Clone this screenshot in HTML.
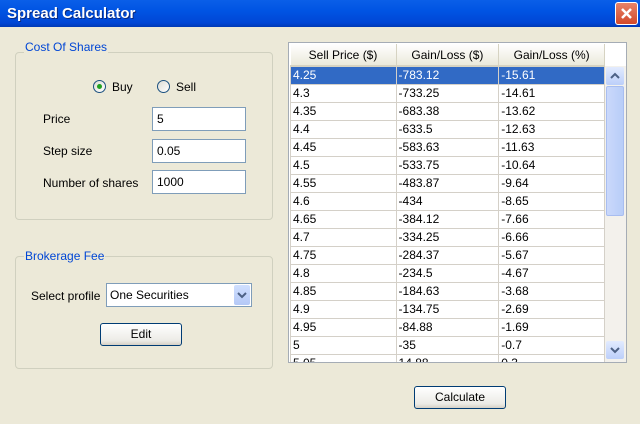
<!DOCTYPE html>
<html><head><style>
*{margin:0;padding:0;box-sizing:border-box}
body{width:640px;height:424px;background:#ece9d8;font-family:"Liberation Sans",sans-serif;font-size:12px;color:#000;position:relative;overflow:hidden}
.abs{position:absolute}
.title{left:0;top:0;width:640px;height:27px;background:linear-gradient(#0a5fe8,#0054e3 40%,#0046d5 85%,#0039b5);color:#fff;font-weight:bold;font-size:15px;padding:5px 0 0 7px;text-shadow:1px 1px #0a2a80}
.close{left:615px;top:2px;width:23px;height:23px;border:1px solid #fff;border-radius:3px;background:linear-gradient(#e8836a,#d3492a);}
.grp{border:1px solid #d0d0bf;border-radius:4px}
.legend{color:#0046d5;background:#ece9d8;padding:0 1px}
.tb{border:1px solid #7f9db9;background:#fff;padding:4px 4px;height:24px}
.btn{border:1px solid #003c74;border-radius:3px;background:linear-gradient(#fff,#ecebe6 80%,#d6d0c5);text-align:center;line-height:21px}
.radio{width:13px;height:13px;border:1px solid #1c5180;border-radius:50%;background:linear-gradient(135deg,#dcdcd4,#fff)}
.wrap{position:absolute;left:289px;top:43px;width:337px;height:319px;overflow:hidden;background:#fff}
table{border-collapse:collapse;position:absolute;left:1px;top:1px;width:315px;background:#fff}
td{height:18px;border:1px solid #d4d0c8;padding:0 2px;font-size:12px;white-space:nowrap}
th{height:22px;font-weight:normal;background:linear-gradient(#fff,#ebeadb);border-bottom:2px solid #d6d3c2;border-right:1px solid #d6d3c2;text-align:center}
tr.sel td{background:#316ac5;color:#fff}
</style></head><body>
<div class="abs title">Spread Calculator</div>
<div class="abs close"><svg width="21" height="21"><path d="M6 6L15 15M15 6L6 15" stroke="#fff" stroke-width="2.5"/></svg></div>

<div class="abs grp" style="left:15px;top:52px;width:258px;height:168px"></div>
<div class="abs legend" style="left:24px;top:40px">Cost Of Shares</div>
<div class="abs radio" style="left:93px;top:80px"><div style="position:absolute;left:3px;top:3px;width:5px;height:5px;border-radius:50%;background:#21a121"></div></div>
<div class="abs" style="left:112px;top:80px">Buy</div>
<div class="abs radio" style="left:157px;top:80px"></div>
<div class="abs" style="left:176px;top:80px">Sell</div>
<div class="abs" style="left:43px;top:112px">Price</div>
<div class="abs" style="left:43px;top:144px">Step size</div>
<div class="abs" style="left:43px;top:176px">Number of shares</div>
<div class="abs tb" style="left:152px;top:107px;width:94px">5</div>
<div class="abs tb" style="left:152px;top:139px;width:94px">0.05</div>
<div class="abs tb" style="left:152px;top:170px;width:94px">1000</div>

<div class="abs grp" style="left:15px;top:256px;width:258px;height:113px"></div>
<div class="abs legend" style="left:24px;top:249px">Brokerage Fee</div>
<div class="abs" style="left:31px;top:289px">Select profile</div>
<div class="abs tb" style="left:106px;top:283px;width:146px;height:24px;padding:4px 3px">One Securities</div>
<div class="abs" style="left:234px;top:285px;width:16px;height:20px;background:linear-gradient(#d0e0ff,#b4c8f6);border-radius:2px"><svg width="16" height="20"><path d="M4 8L8 12L12 8" stroke="#4d6185" stroke-width="2" fill="none"/></svg></div>
<div class="abs btn" style="left:100px;top:323px;width:82px;height:23px">Edit</div>

<div class="abs" style="left:288px;top:42px;width:339px;height:321px;border:1px solid #a5acb5;background:#fff"></div>
<div class="wrap">
<table>
<tr><th style="width:106px">Sell Price ($)</th><th style="width:103px">Gain/Loss ($)</th><th style="width:106px">Gain/Loss (%)</th></tr>
<tr class="sel"><td>4.25</td><td>-783.12</td><td>-15.61</td></tr>
<tr><td>4.3</td><td>-733.25</td><td>-14.61</td></tr>
<tr><td>4.35</td><td>-683.38</td><td>-13.62</td></tr>
<tr><td>4.4</td><td>-633.5</td><td>-12.63</td></tr>
<tr><td>4.45</td><td>-583.63</td><td>-11.63</td></tr>
<tr><td>4.5</td><td>-533.75</td><td>-10.64</td></tr>
<tr><td>4.55</td><td>-483.87</td><td>-9.64</td></tr>
<tr><td>4.6</td><td>-434</td><td>-8.65</td></tr>
<tr><td>4.65</td><td>-384.12</td><td>-7.66</td></tr>
<tr><td>4.7</td><td>-334.25</td><td>-6.66</td></tr>
<tr><td>4.75</td><td>-284.37</td><td>-5.67</td></tr>
<tr><td>4.8</td><td>-234.5</td><td>-4.67</td></tr>
<tr><td>4.85</td><td>-184.63</td><td>-3.68</td></tr>
<tr><td>4.9</td><td>-134.75</td><td>-2.69</td></tr>
<tr><td>4.95</td><td>-84.88</td><td>-1.69</td></tr>
<tr><td>5</td><td>-35</td><td>-0.7</td></tr>
<tr><td>5.05</td><td>14.88</td><td>0.3</td></tr>
</table>
<div class="abs" style="left:316px;top:23px;width:21px;height:296px;background:#f3f1ec"></div>
<div class="abs" style="left:317px;top:24px;width:18px;height:18px;background:linear-gradient(#e2ebfe,#bccffa);border-radius:2px"><svg width="18" height="18"><path d="M5 11L9 7L13 11" stroke="#4d6185" stroke-width="2" fill="none"/></svg></div>
<div class="abs" style="left:317px;top:43px;width:18px;height:130px;background:linear-gradient(90deg,#cad8fb,#b8cdf8);border:1px solid #a8bdf0;border-radius:2px"></div>
<div class="abs" style="left:317px;top:298px;width:18px;height:18px;background:linear-gradient(#e2ebfe,#bccffa);border-radius:2px"><svg width="18" height="18"><path d="M5 7L9 11L13 7" stroke="#4d6185" stroke-width="2" fill="none"/></svg></div>
</div>

<div class="abs btn" style="left:414px;top:386px;width:92px;height:23px">Calculate</div>
</body></html>
